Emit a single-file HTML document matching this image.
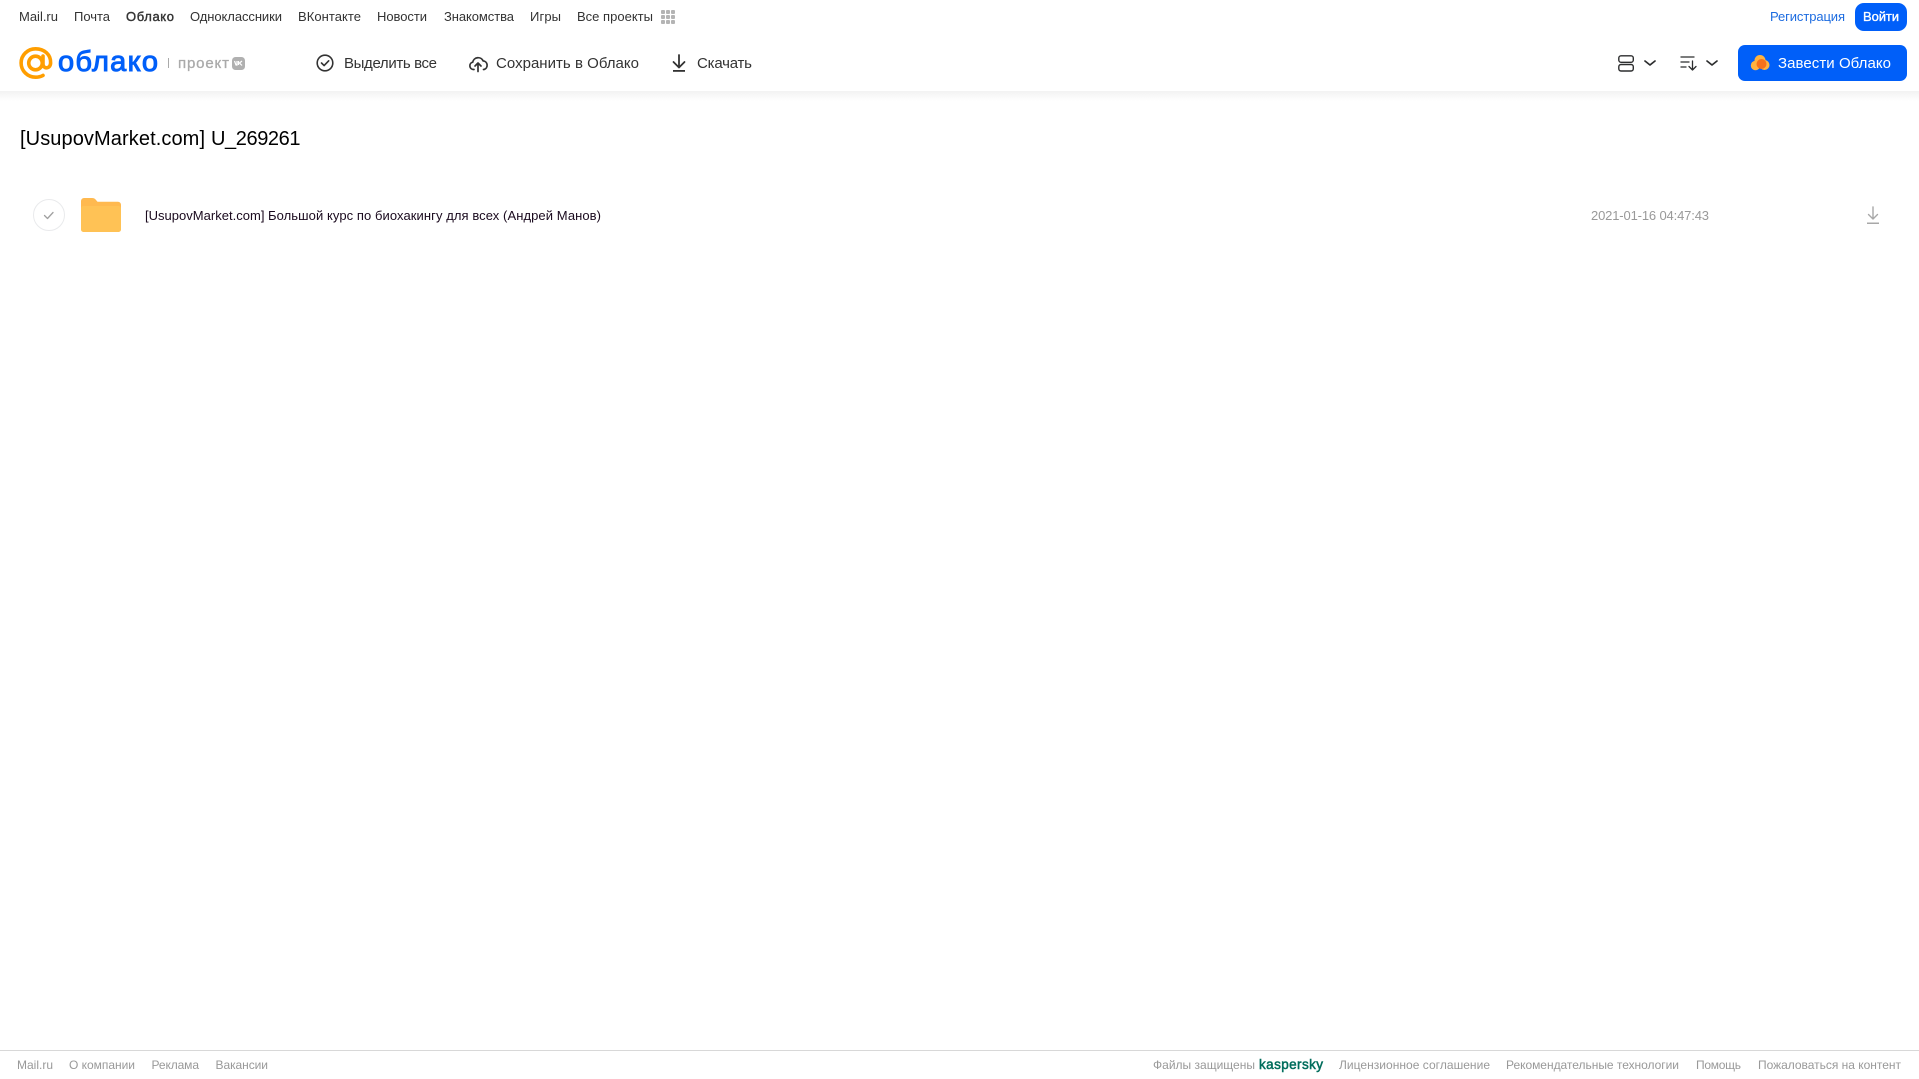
<!DOCTYPE html>
<html lang="ru">
<head>
<meta charset="utf-8">
<title>[UsupovMarket.com] U_269261</title>
<style>
html,body{margin:0;padding:0;background:#fff;width:1919px;height:1079px;overflow:hidden}
svg{display:block}
text{font-family:"Liberation Sans",Arial,sans-serif;white-space:pre}
.n{font-size:13px;fill:#333}
.h{font-size:15px;fill:#333}
.f{font-size:12px;fill:#999}
</style>
</head>
<body>
<svg width="1919" height="1079" viewBox="0 0 1919 1079" xmlns="http://www.w3.org/2000/svg">
<defs>
<linearGradient id="sh" x1="0" y1="0" x2="0" y2="1">
<stop offset="0" stop-color="#f2f2f2"/>
<stop offset="1" stop-color="#fff"/>
</linearGradient>
</defs>
<rect width="1919" height="1079" fill="#fff"/>
<rect x="0" y="91" width="1919" height="10" fill="url(#sh)"/>

<!-- top nav -->
<text class="n" x="19" y="21" textLength="39">Mail.ru</text>
<text class="n" x="74" y="21" textLength="36">Почта</text>
<text class="n" x="126" y="21" textLength="48" stroke="#333" stroke-width=".4">Облако</text>
<text class="n" x="190" y="21" textLength="92">Одноклассники</text>
<text class="n" x="298" y="21" textLength="63">ВКонтакте</text>
<text class="n" x="377" y="21" textLength="50">Новости</text>
<text class="n" x="444" y="21" textLength="70">Знакомства</text>
<text class="n" x="530" y="21" textLength="31">Игры</text>
<text class="n" x="577" y="21" textLength="76">Все проекты</text>
<g fill="#b4b4b4">
<rect x="661" y="10" width="4" height="4" rx="1"/><rect x="666" y="10" width="4" height="4" rx="1"/><rect x="671" y="10" width="4" height="4" rx="1"/>
<rect x="661" y="15" width="4" height="4" rx="1"/><rect x="666" y="15" width="4" height="4" rx="1"/><rect x="671" y="15" width="4" height="4" rx="1"/>
<rect x="661" y="20" width="4" height="4" rx="1"/><rect x="666" y="20" width="4" height="4" rx="1"/><rect x="671" y="20" width="4" height="4" rx="1"/>
</g>
<text class="n" x="1770" y="21" textLength="75" style="fill:#1d6ce0">Регистрация</text>
<rect x="1855" y="3" width="52" height="28" rx="9" fill="#005ff9"/>
<text class="n" x="1863" y="21" textLength="36" stroke="#fff" stroke-width=".35" style="fill:#fff">Войти</text>

<!-- logo -->
<g fill="none" stroke="#ff9e00" stroke-width="3.6" stroke-linecap="round">
<circle cx="35.500" cy="63" r="6.800"/>
<path d="M43 56v8c0 5.200 7.300 5.200 7.600-1 .4-8.500-6.500-14.200-15-14.200-8 0-14.500 6.300-14.500 14.200s6.500 14.200 14.500 14.200c2.800 0 5.200-.6 7.400-1.800"/>
</g>
<text x="58" y="71" font-size="29" fill="#005ff9" stroke="#005ff9" stroke-width="1" textLength="100">облако</text>
<rect x="168" y="58" width="1" height="10" fill="#aaa"/>
<text x="178" y="68" font-size="15" fill="#aaa" stroke="#aaa" stroke-width=".3" textLength="51">проект</text>
<rect x="232" y="57" width="13" height="13" rx="3.500" fill="#b0b0b0"/>
<path d="M234.500 61l1.500 4h1v-4M238.500 61v4M242 61l-2.500 2 2.500 2.500" fill="none" stroke="#fff" stroke-width="1.200"/>

<!-- toolbar -->
<circle cx="325" cy="63" r="7.800" fill="none" stroke="#333" stroke-width="1.600"/>
<path d="M321.500 63l2.600 2.600 4.600-4.800" fill="none" stroke="#333" stroke-width="1.600" stroke-linecap="round" stroke-linejoin="round"/>
<text class="h" x="344" y="68" textLength="93">Выделить все</text>

<path d="M474 69.500h-.5a3.700 3.700 0 0 1-.8-7.300 5.500 5.500 0 0 1 10.400-1.300 4.400 4.400 0 0 1 .9 8.600h-.5" fill="none" stroke="#333" stroke-width="1.700" stroke-linecap="round" stroke-linejoin="round"/>
<path d="M478 71.500v-8.500M475 66l3-3 3 3" fill="none" stroke="#333" stroke-width="1.700" stroke-linecap="round" stroke-linejoin="round"/>
<text class="h" x="496" y="68" textLength="143">Сохранить в Облако</text>

<path d="M679 55v12M673.500 62l5.500 5.500 5.500-5.500" fill="none" stroke="#333" stroke-width="1.800" stroke-linecap="round" stroke-linejoin="round"/>
<rect x="673" y="70" width="12" height="1.800" fill="#333"/>
<text class="h" x="697" y="68" textLength="55">Скачать</text>

<!-- view / sort -->
<rect x="1618.800" y="55.800" width="14.500" height="6.500" rx="2.200" fill="none" stroke="#2c2d2e" stroke-width="1.400"/>
<rect x="1618.800" y="64.500" width="14.500" height="6.500" rx="2.200" fill="none" stroke="#2c2d2e" stroke-width="1.400"/>
<path d="M1645 61l5 4 5-4" fill="none" stroke="#2c2d2e" stroke-width="1.700" stroke-linecap="round" stroke-linejoin="round"/>
<path d="M1681 57h13M1681 62h8M1681 67h5M1692.500 61v9M1689 66.500l3.500 3.500 3.500-3.500" fill="none" stroke="#2c2d2e" stroke-width="1.300" stroke-linecap="round" stroke-linejoin="round"/>
<path d="M1707 61l5 4 5-4" fill="none" stroke="#2c2d2e" stroke-width="1.700" stroke-linecap="round" stroke-linejoin="round"/>

<rect x="1738" y="45" width="169" height="36" rx="7" fill="#005ff9"/>
<g fill="#ffb340">
<circle cx="1755.500" cy="65.500" r="4.700"/>
<circle cx="1760" cy="60.500" r="5.500"/>
<circle cx="1764.500" cy="65" r="5"/>
</g>
<circle cx="1761.500" cy="64" r="5" fill="#f5711c"/>
<text class="h" x="1778" y="68" textLength="113" style="fill:#fff">Завести Облако</text>

<!-- title -->
<text x="20" y="145" font-size="20" fill="#000" textLength="185">[UsupovMarket.com]</text>
<text x="211" y="145" font-size="20" fill="#000" textLength="89.500">U_269261</text>

<!-- row -->
<circle cx="49" cy="215" r="15.500" fill="#fff" stroke="#e9eaec" stroke-width="1"/>
<path d="M44.500 215.500l3 3 5.500-6" fill="none" stroke="#a0a0a0" stroke-width="1.300" stroke-linecap="round" stroke-linejoin="round"/>
<path d="M81 201a3 3 0 0 1 3-3h8c2 0 3 .8 4 2l1.500 1.700H118a3 3 0 0 1 3 3V229a3 3 0 0 1-3 3H84a3 3 0 0 1-3-3z" fill="#ffb94f"/>
<rect x="81" y="206" width="40" height="26" rx="2.500" fill="#ffc255"/>
<text x="145" y="220" font-size="13" fill="#1a0a1e" textLength="119.500">[UsupovMarket.com]</text>
<text x="268" y="220" font-size="13" fill="#1a0a1e" textLength="333">Большой курс по биохакингу для всех (Андрей Манов)</text>
<text x="1591" y="220" font-size="13" fill="#999" textLength="118">2021-01-16 04:47:43</text>
<path d="M1873 207v12M1868.500 214.500l4.500 4.500 4.500-4.500" fill="none" stroke="#a8a8a8" stroke-width="1.400" stroke-linecap="round" stroke-linejoin="round"/>
<rect x="1867" y="222.500" width="12" height="1.500" fill="#a8a8a8"/>

<!-- footer -->
<rect x="0" y="1050" width="1919" height="1" fill="#d8d8d8"/>
<text class="f" x="17" y="1069" textLength="36">Mail.ru</text>
<text class="f" x="69" y="1069" textLength="66">О компании</text>
<text class="f" x="151.500" y="1069" textLength="47.500">Реклама</text>
<text class="f" x="215.500" y="1069" textLength="52.500">Вакансии</text>
<text class="f" x="1153" y="1069" textLength="102">Файлы защищены</text>
<text x="1259" y="1069" font-size="13.500" fill="#006d5c" stroke="#006d5c" stroke-width=".5" textLength="64">kaspersky</text>
<text class="f" x="1339" y="1069" textLength="151">Лицензионное соглашение</text>
<text class="f" x="1506" y="1069" textLength="173">Рекомендательные технологии</text>
<text class="f" x="1696" y="1069" textLength="45">Помощь</text>
<text class="f" x="1758" y="1069" textLength="143">Пожаловаться на контент</text>
</svg>
</body>
</html>
